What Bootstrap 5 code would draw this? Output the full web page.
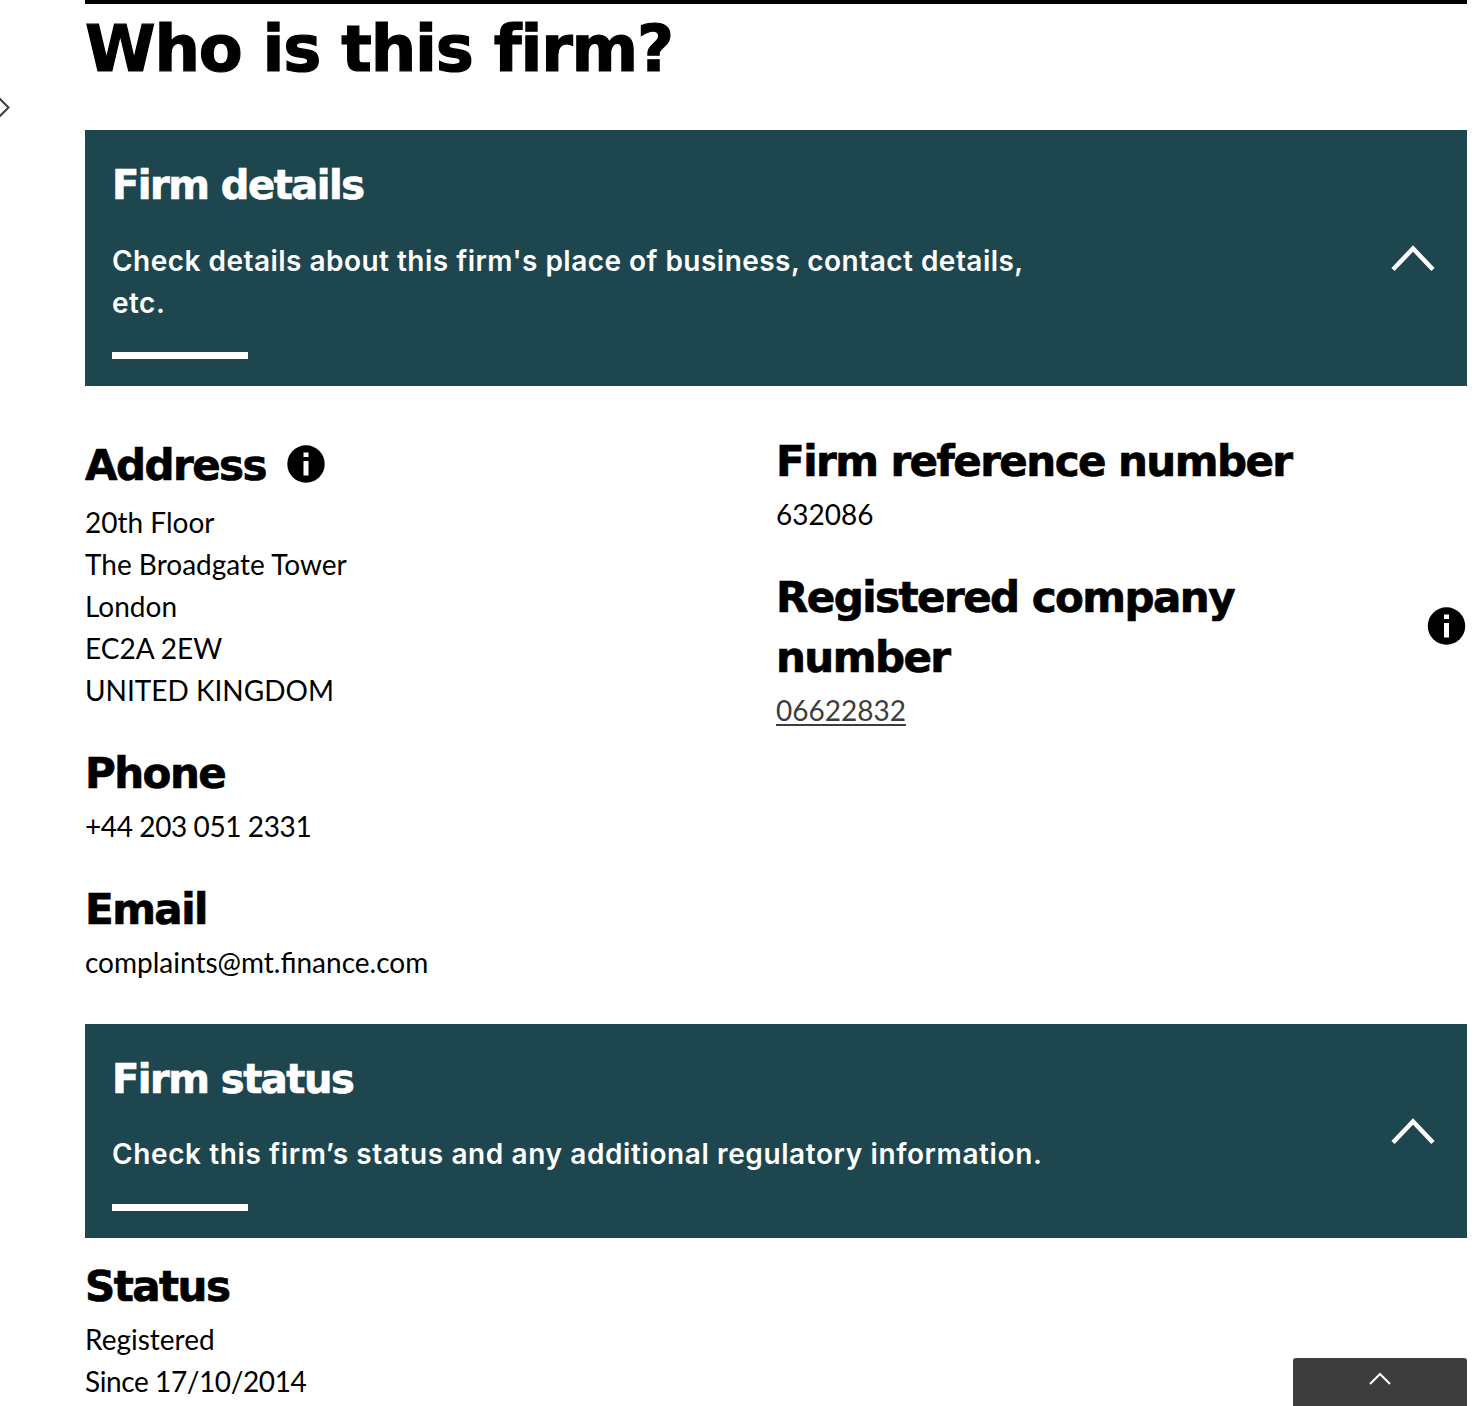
<!DOCTYPE html>
<html lang="en">
<head>
<meta charset="utf-8">
<meta name="viewport" content="width=device-width, initial-scale=1">
<title>Firm register</title>
<link rel="stylesheet" href="https://cdn.jsdelivr.net/npm/bootstrap@5.3.0/dist/css/bootstrap.min.css">
<style>
html,body{height:1406px;overflow:hidden}
body{font:400 28px/42px Lato,sans-serif;color:#000;background:#fff}
.page{width:1382px;margin-left:85px;border-top:4px solid #000}
h1,h2,h3{font-family:"DejaVu Sans",sans-serif;font-weight:700;margin:0}
h1{font-size:64px;line-height:90px;letter-spacing:-1.2px;-webkit-text-stroke:1.2px #000}
h2{font-size:40px;line-height:60px;letter-spacing:-1.5px;-webkit-text-stroke:.7px #fff}
h3{font-size:42px;line-height:60px;letter-spacing:-1.55px;margin-bottom:1px;-webkit-text-stroke:.7px #000}
.banner{background:#1d464f;color:#fff;padding:25px 32px 27px 27px}
.banner-first{margin-top:36px}
.desc{font-family:Inter,sans-serif;font-weight:600;letter-spacing:.6px;width:960px;margin:24px 0 29px}
.desc-long{letter-spacing:.47px;margin:25px 0 28px}
.rule{width:136px;height:7px;background:#fff}
.chevron{margin-top:2px}
.details{padding-top:46px;height:638px}
.entry{margin-bottom:33px}
.address-head{padding:4px 0}
.address-head .info{margin-left:21px}
.info{margin-bottom:5px}
.numeric{letter-spacing:-.4px}
.plain-link{color:#3d3d3d;text-decoration:underline;text-decoration-thickness:2px;text-underline-offset:3px}
.side-arrow{left:0;top:96px}
.to-top{right:17px;bottom:0;width:174px;height:48px;background:#3d3d3d;border-radius:3px 3px 0 0;padding-top:14px}
svg{display:block;flex:none}
</style>
<script src="https://cdn.jsdelivr.net/npm/bootstrap@5.3.0/dist/js/bootstrap.bundle.min.js"></script>
</head>
<body class="position-relative">
<svg class="side-arrow position-absolute" width="12" height="24" fill="none" stroke="#3d3d3d" stroke-width="2"><path d="M-1 2 8.500 11.500-1 21"/></svg>
<main class="page">
  <h1>Who is this firm?</h1>
  <section class="banner banner-first d-flex justify-content-between align-items-center">
    <div>
      <h2>Firm details</h2>
      <p class="desc desc-long">Check details about this firm's place of business, contact details, etc.</p>
      <div class="rule"></div>
    </div>
    <svg class="chevron" width="44" height="28" fill="none" stroke="#fff" stroke-width="4.500"><path d="M2 25.500 22 4.500 42 25.500"/></svg>
  </section>
  <div class="row g-0 details">
    <div class="col-6">
      <div class="entry">
        <div class="d-flex align-items-center address-head"><h3>Address</h3>
          <svg class="info" width="38" height="38" viewBox="0 0 38 38"><circle cx="19" cy="19" r="18.700"/><path fill="#fff" d="M16.500 7.500h5v4.500h-5zM16.500 16h5v14.500h-5z"/></svg></div>
        <div>20th Floor<br>The Broadgate Tower<br>London<br>EC2A 2EW<br>UNITED KINGDOM</div>
      </div>
      <div class="entry"><h3>Phone</h3><div class="numeric">+44 203 051 2331</div></div>
      <div class="entry"><h3>Email</h3><div>complaints@mt.finance.com</div></div>
    </div>
    <div class="col-6">
      <div class="entry"><h3>Firm reference number</h3><div>632086</div></div>
      <div class="entry">
        <div class="d-flex justify-content-between align-items-center"><h3 class="w-75">Registered company number</h3>
          <svg class="info" width="40" height="38" viewBox="0 0 40 38"><circle cx="19.500" cy="19" r="18.700"/><path fill="#fff" d="M17 7.500h5v4.500h-5zM17 16h5v14.500h-5z"/></svg></div>
        <div><a class="plain-link" href="#">06622832</a></div>
      </div>
    </div>
  </div>
  <section class="banner d-flex justify-content-between align-items-center">
    <div>
      <h2>Firm status</h2>
      <p class="desc">Check this firm’s status and any additional regulatory information.</p>
      <div class="rule"></div>
    </div>
    <svg class="chevron" width="44" height="28" fill="none" stroke="#fff" stroke-width="4.500"><path d="M2 25.500 22 4.500 42 25.500"/></svg>
  </section>
  <div class="entry" style="padding-top:19px"><h3>Status</h3><div>Registered<br><span class="numeric">Since 17/10/2014</span></div></div>
</main>
<a class="to-top position-absolute d-flex justify-content-center" href="#" aria-label="Back to top"><svg width="24" height="14" fill="none" stroke="#fff" stroke-width="2"><path d="M2 12 12 2 22 12"/></svg></a>
</body>
</html>
